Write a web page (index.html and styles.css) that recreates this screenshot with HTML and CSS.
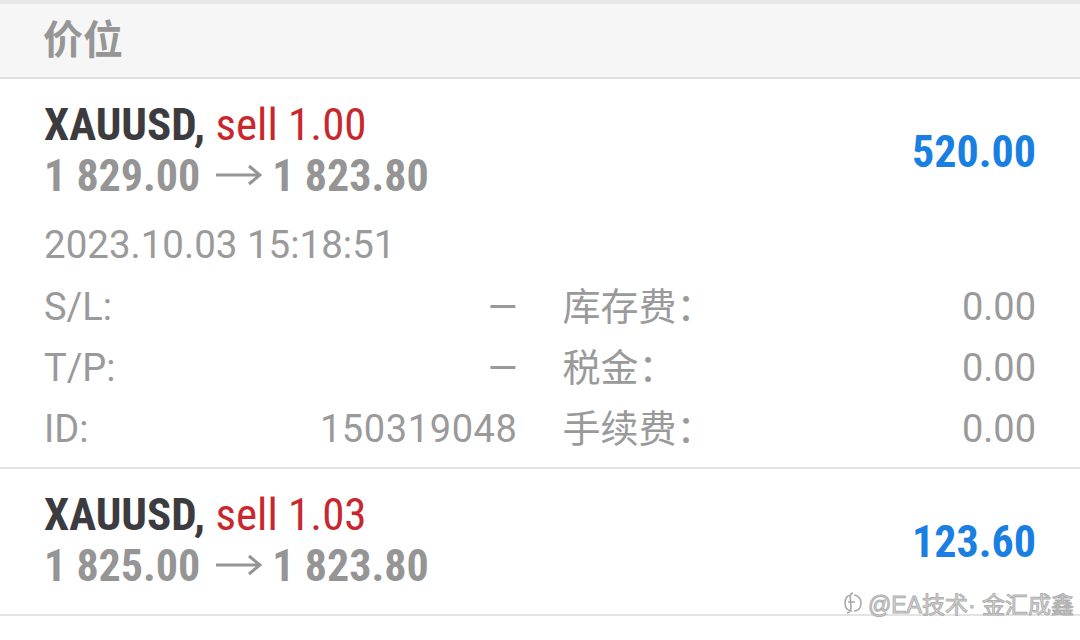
FILE: index.html
```
<!DOCTYPE html>
<html>
<head>
<meta charset="utf-8">
<title>持仓</title>
<link rel="stylesheet" href="styles.css">
</head>
<body>

<div class="header">价位</div>

<div class="position">
  <div class="pos-head">
    <div class="pos-info">
      <div class="symbol">XAUUSD, <span class="sell">sell 1.00</span></div>
      <div class="prices">1 829.00<svg class="arrow" width="47" height="24" viewBox="0 0 47 24"><path d="M1 12 H44 M34 3 L45 12 L34 21" fill="none" stroke="#959595" stroke-width="3"/></svg>1 823.80</div>
    </div>
    <div class="profit">520.00</div>
  </div>
  <div class="date">2023.10.03 15:18:51</div>
  <div class="details">
    <div class="cell"><span>S/L:</span><span>&mdash;</span></div>
    <div class="cell"><span>库存费：</span><span>0.00</span></div>
    <div class="cell"><span>T/P:</span><span>&mdash;</span></div>
    <div class="cell"><span>税金：</span><span>0.00</span></div>
    <div class="cell"><span>ID:</span><span class="id">150319048</span></div>
    <div class="cell"><span>手续费：</span><span>0.00</span></div>
  </div>
</div>

<div class="position short">
  <div class="pos-head">
    <div class="pos-info">
      <div class="symbol">XAUUSD, <span class="sell">sell 1.03</span></div>
      <div class="prices">1 825.00<svg class="arrow" width="47" height="24" viewBox="0 0 47 24"><path d="M1 12 H44 M34 3 L45 12 L34 21" fill="none" stroke="#959595" stroke-width="3"/></svg>1 823.80</div>
    </div>
    <div class="profit">123.60</div>
  </div>
</div>

<div class="watermark">
  <svg class="logo" width="22" height="24" viewBox="0 0 22 24">
    <path d="M9 4 C5 4 3 8 3 12 C3 17 6 20 10 20 M12 4 C16 4 19 8 19 12 C19 17 16 20 12 20 M11 2 C8 2 8 6 8.5 10 L9 16 C9 20 8 22 5 22 M6 11 L13 11" fill="none" stroke="#a8a8a8" stroke-width="1.6"/>
  </svg>
  <span>@EA技术· 金汇成鑫</span>
</div>

</body>
</html>
```

FILE: styles.css
```
body {
  margin: 0;
  width: 1080px;
  height: 640px;
  overflow: hidden;
  position: relative;
  background-color: white;
  font-family: Roboto, "Noto Sans CJK SC", sans-serif;
}

.header {
  border-top: 4px solid #e8e8e8;
  border-bottom: 2px solid #e0e0e0;
  background-color: #f6f6f6;
  height: 73px;
  line-height: 66px;
  padding-left: 43px;
  font-family: "Noto Sans CJK SC", sans-serif;
  font-size: 40px;
  font-weight: bold;
  color: #969696;
}

.position {
  padding: 22px 44px 7px 44px;
  border-bottom: 2px solid #e3e3e3;
}

.position.short {
  padding-bottom: 21px;
}

.pos-head {
  display: flex;
  justify-content: space-between;
  align-items: center;
}

.symbol,
.prices,
.profit {
  font-family: "Roboto Condensed", Roboto, sans-serif;
  font-stretch: condensed;
  font-weight: bold;
}

.symbol {
  font-size: 45px;
  line-height: 48px;
  color: #3c3c40;
}

.sell {
  font-weight: normal;
  color: #c8282d;
}

.prices {
  font-size: 44px;
  line-height: 54px;
  color: #959595;
}

.arrow {
  margin: 0 10px 0 15px;
  vertical-align: 4px;
}

.profit {
  font-size: 44px;
  color: #1a7fe2;
}

.date {
  margin-top: 17px;
  font-size: 38.5px;
  line-height: 50px;
  color: #9a9a9a;
}

.details {
  display: grid;
  grid-template-columns: 1fr 1fr;
  column-gap: 45px;
  margin-top: 7px;
}

.cell {
  display: flex;
  justify-content: space-between;
  font-size: 38px;
  line-height: 61px;
  color: #9a9a9a;
}

.id {
  letter-spacing: 0.6px;
}

.watermark {
  position: absolute;
  right: 6px;
  top: 586px;
  display: flex;
  align-items: center;
  gap: 4px;
  font-size: 23px;
  color: #dadada;
  -webkit-text-stroke: 1px #b0b0b0;
  font-family: "Liberation Sans", "Noto Sans CJK SC", sans-serif;
}
```
